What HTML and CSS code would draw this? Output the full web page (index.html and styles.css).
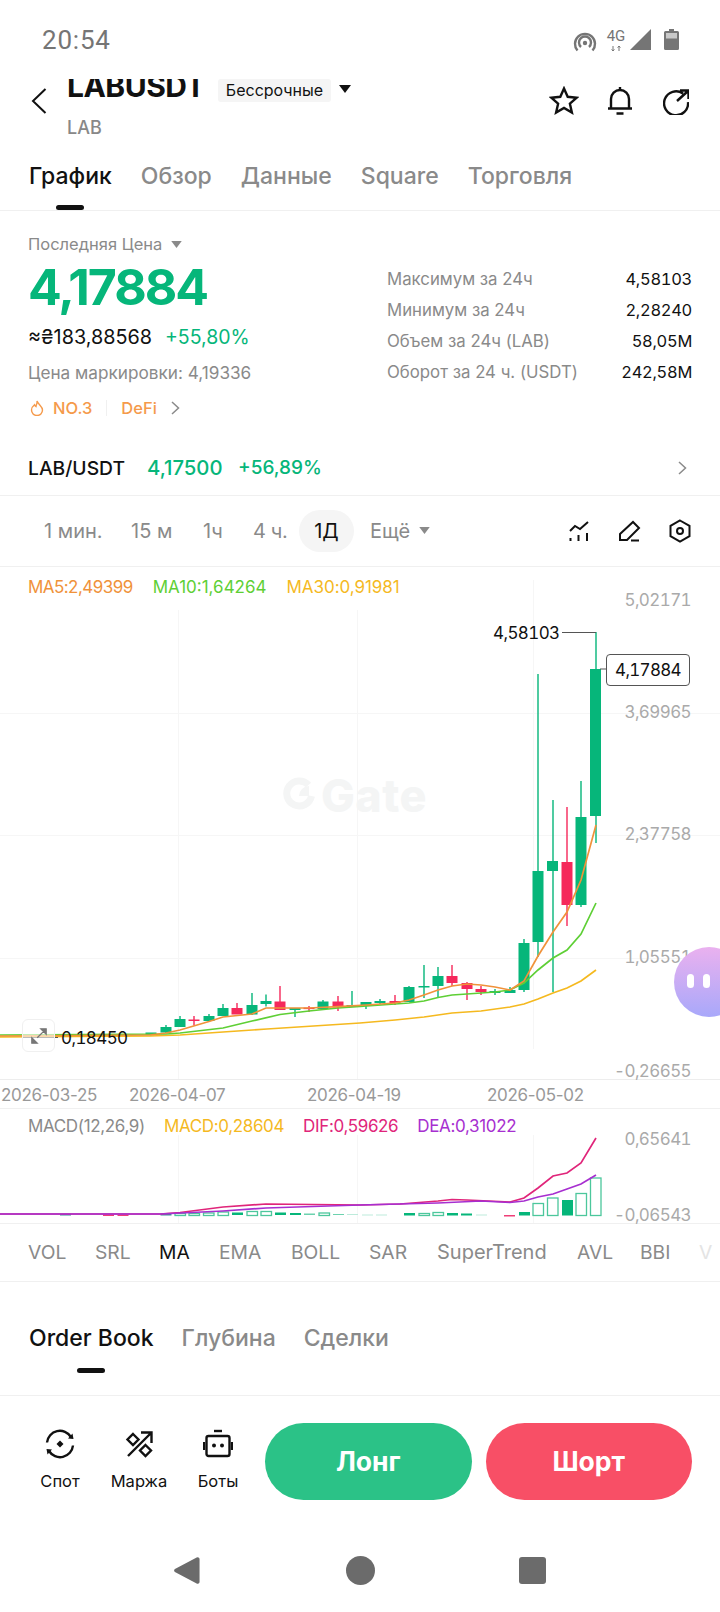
FILE: index.html
```html
<!DOCTYPE html>
<html lang="ru">
<head>
<meta charset="utf-8">
<title>LABUSDT</title>
<link rel="stylesheet" href="styles.css">
</head>
<body>
<div class="page">
  <header class="status">
    <span class="clock">20:54</span>
    <div class="status-icons">
      <svg class="ic-hotspot" viewBox="0 0 24 22"><path d="M4.500 19.500a10 10 0 1 1 15 0M8 16a6 6 0 1 1 8 0" class="st-line"/><circle cx="12" cy="12" r="2.200" class="st-fill"/></svg>
      <div class="net"><span class="net-label">4G</span><svg class="net-arrows" viewBox="0 0 12 5"><path d="M3 0v5M1.600 3.400 3 5l1.400-1.600M9 5V0M7.600 1.600 9 0l1.400 1.600" class="st-thin"/></svg></div>
      <svg class="ic-signal" viewBox="0 0 21 21"><path d="M0 21 21 0v21z" class="st-fill"/></svg>
      <svg class="ic-battery" viewBox="0 0 15 21"><path d="M5 0h5v2h3.500A1.500 1.500 0 0 1 15 3.500V19.500A1.500 1.500 0 0 1 13.500 21H1.500A1.500 1.500 0 0 1 0 19.500V3.500A1.500 1.500 0 0 1 1.500 2H5z" class="st-fill"/><rect x="2" y="4" width="11" height="5.500" class="st-white"/></svg>
    </div>
  </header>

  <section class="head">
    <svg class="ic-back" viewBox="0 0 16 26"><path d="M14.500 1 2 13l12.500 12" class="ln-2"/></svg>
    <div class="title-block">
      <div class="title-row">
        <div class="name-clip"><span class="name">LABUSDT</span></div>
        <span class="badge">Бессрочные</span>
        <svg class="tri-black" viewBox="0 0 12 8"><path d="M0 0h12L6 8z"/></svg>
      </div>
      <div class="sub">LAB</div>
    </div>
    <div class="head-actions">
      <svg class="ic-star" viewBox="0 0 30 29"><path d="m15 2.500 3.700 8.300 9 .9-6.800 6 2 8.800-7.900-4.600-7.900 4.600 2-8.800-6.800-6 9-.9z" class="ln-25"/></svg>
      <svg class="ic-bell" viewBox="0 0 26 29"><path d="M1 22.500h24M4 22.500V13a9 9 0 0 1 18 0v9.500M13 4V1M9.500 27.500h7" class="ln-25"/></svg>
      <svg class="ic-share" viewBox="0 0 26 26"><path d="M20 4.500A12 12 0 1 0 25 13M14 12 25 2M17 1.500h8.500V10" class="ln-25"/></svg>
    </div>
  </section>

  <nav class="tabs">
    <span class="tab active">График<i class="tab-bar"></i></span>
    <span class="tab">Обзор</span>
    <span class="tab">Данные</span>
    <span class="tab">Square</span>
    <span class="tab">Торговля</span>
  </nav>

  <section class="stats">
    <div class="stats-left">
      <div class="price-label">Последняя Цена<svg class="tri-grey" viewBox="0 0 12 8"><path d="M0 0h12L6 8z"/></svg></div>
      <div class="price">4,17884</div>
      <div class="fiat"><span>≈₴183,88568</span><span class="green">+55,80%</span></div>
      <div class="mark">Цена маркировки: 4,19336</div>
      <div class="tags">
        <svg class="ic-flame" viewBox="0 0 14 16"><path d="M7 1c.500 3-1 3.500-1 5.500-.800-.300-1.300-1-1.500-1.700C3 6 1.500 7.600 1.500 10a5.500 5.500 0 0 0 11 0C12.500 6.500 8.500 5 7 1z"/></svg>
        <span class="tag-text">NO.3</span>
        <i class="tag-sep"></i>
        <span class="tag-text">DeFi</span>
        <svg class="ic-chev" viewBox="0 0 9 14"><path d="m1 1 6.500 6L1 13"/></svg>
      </div>
    </div>
    <dl class="stats-right">
      <div class="stat"><dt>Максимум за 24ч</dt><dd>4,58103</dd></div>
      <div class="stat"><dt>Минимум за 24ч</dt><dd>2,28240</dd></div>
      <div class="stat"><dt>Объем за 24ч (LAB)</dt><dd>58,05M</dd></div>
      <div class="stat"><dt>Оборот за 24 ч. (USDT)</dt><dd>242,58M</dd></div>
    </dl>
  </section>

  <section class="spot-row">
    <span class="spot-name">LAB/USDT</span>
    <span class="spot-price">4,17500</span>
    <span class="spot-change">+56,89%</span>
    <svg class="ic-chev spot-chev" viewBox="0 0 9 14"><path d="m1 1 6.500 6L1 13"/></svg>
  </section>

  <section class="intervals">
    <span class="iv iv-1">1 мин.</span>
    <span class="iv iv-2">15 м</span>
    <span class="iv iv-3">1ч</span>
    <span class="iv iv-4">4 ч.</span>
    <span class="iv iv-active">1Д</span>
    <span class="iv iv-more">Ещё<svg class="tri-grey" viewBox="0 0 12 8"><path d="M0 0h12L6 8z"/></svg></span>
    <div class="iv-tools">
      <svg class="tool" viewBox="568 518 24 24"><path d="m570 530 5-5 5 3 8-7M570.500 537v3M578.500 534v6M587 532v8" class="ln-2"/></svg>
      <svg class="tool" viewBox="619 518 24 24"><path d="m621 533 13-12 6 6-12 12h-7zM632 539.500h8" class="ln-2"/></svg>
      <svg class="tool" viewBox="669 519 24 24"><path d="m681 520.500 9.500 5.300v10.400l-9.500 5.300-9.500-5.300V525.800z" class="ln-2"/><circle cx="681" cy="531" r="3" class="ln-2"/></svg>
    </div>
  </section>

  <section class="chart">
    <svg class="chart-svg" viewBox="0 567 720 512">
      <path class="grid" d="M0 713.500h720M0 835.500h720M0 958.500h720M178.500 610v469M357.500 610v469M533.500 580v469"/>
      <g class="wm">
        <path class="wm-ring" d="M308.500 785a12.500 12.500 0 1 0 3 11"/>
        <path class="wm-dot" d="M299 796h10v-10a10 10 0 0 0-10 10z"/>
      </g>
      <g class="up">
        <path d="M166 1025v8M180 1016v11M209 1014v8M223 1004v12M252 993v22M266 994.600v12M295 1008v9M323 1000v9M352 991v16M366 1002v7M380 999v5M409 986v16M424 965v33M438 967v30M495 989v6M510 987v6M524 939v53M538 674v283M553 800v192M581 781v126M596 632v211"/>
        <rect x="145.500" y="1032.500" width="11" height="2.500"/>
        <rect x="160.500" y="1027" width="11" height="5.500"/>
        <rect x="174.500" y="1019" width="11" height="8"/>
        <rect x="203.500" y="1016" width="11" height="5"/>
        <rect x="217.500" y="1008" width="11" height="8"/>
        <rect x="246.500" y="1005" width="11" height="9.500"/>
        <rect x="260.500" y="1001" width="11" height="3"/>
        <rect x="289.500" y="1008" width="11" height="2"/>
        <rect x="317.500" y="1001.500" width="11" height="7.500"/>
        <rect x="346.500" y="1005" width="11" height="2"/>
        <rect x="360.500" y="1002" width="11" height="4"/>
        <rect x="374.500" y="1001" width="11" height="2"/>
        <rect x="403.500" y="987" width="11" height="15"/>
        <rect x="418.500" y="986" width="11" height="1.500"/>
        <rect x="432.500" y="976" width="11" height="10"/>
        <rect x="489.500" y="991" width="11" height="2"/>
        <rect x="504.500" y="990" width="11" height="3"/>
        <rect x="518.500" y="943" width="11" height="47"/>
        <rect x="532.500" y="871" width="11" height="71"/>
        <rect x="547" y="861" width="11" height="10"/>
        <rect x="575.500" y="817" width="11" height="88"/>
        <rect x="590" y="669" width="11" height="147"/>
      </g>
      <g class="dn">
        <path d="M194 1016v9.500M237 1003v11M280 986v24M309 1006v6M338 996v15M395 995v10M452 965v21M467 982v18M481 986v9M567 807v119"/>
        <rect x="188.500" y="1019.500" width="11" height="1.500"/>
        <rect x="231.500" y="1008" width="11" height="6.500"/>
        <rect x="274.500" y="1001.500" width="11" height="8.500"/>
        <rect x="303.500" y="1007.600" width="11" height="1.500"/>
        <rect x="332.500" y="1001.500" width="11" height="6"/>
        <rect x="389.500" y="1001" width="11" height="2"/>
        <rect x="446.500" y="976" width="11" height="7"/>
        <rect x="461.500" y="983" width="11" height="6"/>
        <rect x="475.500" y="989" width="11" height="3"/>
        <rect x="561.500" y="862" width="11" height="43"/>
      </g>
      <polyline class="ma30" points="0,1037 150,1036 180,1035 223,1032 267,1029 360,1023 395,1020 424,1017 452,1013 481,1011 510,1007 524,1004 538,999 553,993 567,988 581,981 596,970"/>
      <polyline class="ma10" points="0,1035 166,1034 180,1033 223,1028 252,1021 280,1014.500 309,1011 338,1008 360,1006.500 395,1004 409,1003 424,1001 438,997.500 452,995 467,994 481,993 495,992 510,990 524,983 538,970 553,958 567,950 581,934 596,903"/>
      <polyline class="ma5" points="0,1036 150,1035 166,1033 180,1030 209,1021.500 223,1017 252,1014 266,1008 309,1008 338,1006.600 366,1005 395,1003 409,1000 424,995 438,990 452,986 467,984 481,985 495,987 510,990 524,981 538,956 553,932 567,912 581,880 596,825"/>
      <path class="hi-line" d="M562 632.500h34M600 669h6M22 1037.500h36"/>
    </svg>
    <div class="legend">
      <span class="c-ma5">MA5:2,49399</span>
      <span class="c-ma10">MA10:1,64264</span>
      <span class="c-ma30 wide">MA30:0,91981</span>
    </div>
    <span class="wm-text">Gate</span>
    <span class="axis ax-1">5,02171</span>
    <span class="axis ax-2">3,69965</span>
    <span class="axis ax-3">2,37758</span>
    <span class="axis ax-4">1,05551</span>
    <span class="axis ax-5">-0,26655</span>
    <span class="hi-label">4,58103</span>
    <span class="last-box">4,17884</span>
    <span class="lo-label">0,18450</span>
    <div class="expand"><svg viewBox="0 0 20 20"><path d="M12 2h6v6zM2 18h6l-6-6zM8 12l8-8" class="expand-ic"/></svg></div>
    <div class="blob"><i class="eye"></i><i class="eye"></i></div>
  </section>

  <div class="dates">
    <span class="date d1">2026-03-25</span>
    <span class="date d2">2026-04-07</span>
    <span class="date d3">2026-04-19</span>
    <span class="date d4">2026-05-02</span>
  </div>

  <section class="macd">
    <svg class="macd-svg" viewBox="0 1109 720 114">
      <path class="grid" d="M178.500 1135v88M357.500 1135v88M533.500 1135v88"/>
      <g class="bars-solid">
        <rect class="b-blue" x="60" y="1214" width="11" height="1.500"/>
        <rect class="b-pink" x="103" y="1214.500" width="11" height="1.500"/>
        <rect class="b-pink" x="117.500" y="1214.500" width="11" height="1.500"/>
        <rect class="b-blue" x="160.500" y="1214" width="11" height="1.500"/>
        <rect x="232" y="1212.500" width="11" height="2.500"/>
        <rect x="275" y="1212.500" width="11" height="2.500"/>
        <rect x="290" y="1213" width="11" height="2"/>
        <rect class="b-light" x="304" y="1213.500" width="11" height="1.500"/>
        <rect class="b-light" x="333" y="1214" width="11" height="1"/>
        <rect class="b-fade" x="347" y="1214" width="11" height="1"/>
        <rect class="b-fade" x="362" y="1214.500" width="11" height="1"/>
        <rect class="b-fade" x="376" y="1214.500" width="11" height="1"/>
        <rect x="404" y="1213" width="11" height="2.500"/>
        <rect x="447" y="1213" width="11" height="2.500"/>
        <rect x="461" y="1213.500" width="11" height="2"/>
        <rect class="b-fade" x="476" y="1214.500" width="11" height="1"/>
        <rect class="b-pink" x="504" y="1215" width="11" height="1.500"/>
        <rect x="519" y="1212" width="11" height="3.500"/>
        <rect x="562" y="1200" width="11" height="15.500"/>
      </g>
      <g class="bars-hollow">
        <rect x="175" y="1213.500" width="10.500" height="2"/>
        <rect x="189" y="1213.500" width="10.500" height="2"/>
        <rect x="203.500" y="1213" width="10.500" height="2.500"/>
        <rect x="218" y="1212" width="10.500" height="3.500"/>
        <rect x="247" y="1211.500" width="10.500" height="4"/>
        <rect x="261" y="1211.500" width="10.500" height="4"/>
        <rect x="319" y="1213" width="10.500" height="2.500"/>
        <rect x="419" y="1213.500" width="10.500" height="2"/>
        <rect x="433" y="1212.500" width="10.500" height="3"/>
        <rect x="533" y="1203.500" width="10.500" height="12"/>
        <rect x="547.500" y="1198" width="10.500" height="17.500"/>
        <rect x="576" y="1193.500" width="10.500" height="22"/>
        <rect x="590.500" y="1178" width="10.500" height="37.500"/>
      </g>
      <polyline class="dif" points="0,1214 160,1214 180,1212.500 223,1207 266,1204 360,1205 400,1204 438,1201 452,1199.500 467,1200 510,1202 524,1198 538,1188 553,1176 567,1173 581,1163 596,1138"/>
      <polyline class="dea" points="0,1214 160,1214 223,1211 266,1208 360,1205 438,1203 481,1201 510,1202.500 524,1201 538,1197 553,1194 567,1189 581,1184 596,1175"/>
    </svg>
    <div class="legend macd-legend">
      <span class="c-macd">MACD(12,26,9)</span>
      <span class="c-ma30">MACD:0,28604</span>
      <span class="c-dif">DIF:0,59626</span>
      <span class="c-dea">DEA:0,31022</span>
    </div>
    <span class="axis ax-6">0,65641</span>
    <span class="axis ax-7">-0,06543</span>
  </section>

  <nav class="indicators">
    <span class="ind i1">VOL</span>
    <span class="ind i2">SRL</span>
    <span class="ind ind-on i3">MA</span>
    <span class="ind i4">EMA</span>
    <span class="ind i5">BOLL</span>
    <span class="ind i6">SAR</span>
    <span class="ind i7">SuperTrend</span>
    <span class="ind i8">AVL</span>
    <span class="ind i9">BBI</span>
    <span class="ind i10">V</span>
  </nav>

  <nav class="book-tabs">
    <span class="tab active">Order Book<i class="tab-bar"></i></span>
    <span class="tab">Глубина</span>
    <span class="tab">Сделки</span>
  </nav>

  <section class="actions">
    <div class="tools">
      <div class="tool-item">
        <svg class="act-ic" viewBox="0 0 30 30"><path d="M2 13.500A13 13 0 0 1 26 8M28 16.500A13 13 0 0 1 4 22" class="ln-25"/><path d="m23 9.500 5.500.5-1-5.500zM7 20.500 1.500 20l1 5.500z" class="fill-k"/><path d="m15 11.500 3.500 3.500-3.500 3.500-3.500-3.500z" class="fill-k"/></svg>
        <span>Спот</span>
      </div>
      <div class="tool-item">
        <svg class="act-ic" viewBox="0 0 30 30"><path d="M4 27 27 4M17 3.500h10.500V14" class="ln-25"/><path d="m9 5 5.500 5.500L9 16l-5.500-5.500zM21.500 16 27 21.500 21.500 27 16 21.500z" class="ln-25"/></svg>
        <span>Маржа</span>
      </div>
      <div class="tool-item">
        <svg class="act-ic" viewBox="0 0 30 30"><path d="M11 2h8" class="ln-25"/><rect x="3.500" y="7" width="23" height="20" rx="2" class="ln-25"/><path d="M1 13v8M29 13v8" class="ln-25"/><circle cx="11" cy="16.500" r="2" class="fill-k"/><circle cx="19" cy="16.500" r="2" class="fill-k"/></svg>
        <span>Боты</span>
      </div>
    </div>
    <div class="trade">
      <span class="btn btn-long">Лонг</span>
      <span class="btn btn-short">Шорт</span>
    </div>
  </section>

  <footer class="sysnav">
    <svg class="nav-ic" viewBox="0 0 27 30"><path d="M24 1.500a2 2 0 0 1 3 1.500v24a2 2 0 0 1-3 1.500L1.500 16.500a2 2 0 0 1 0-3z"/></svg>
    <svg class="nav-ic" viewBox="0 0 29 29"><circle cx="14.500" cy="14.500" r="14.500"/></svg>
    <svg class="nav-ic" viewBox="0 0 27 27"><rect width="27" height="27" rx="3"/></svg>
  </footer>
</div>
</body>
</html>
```
FILE: styles.css
```css
* { box-sizing: border-box; }
html, body { margin: 0; padding: 0; background: #fff; }
body { font-family: Inter, "Noto Sans", sans-serif; color: #111; }
.page { width: 720px; height: 1612px; overflow: hidden; position: relative; background: #fff; }
dl, dt, dd { margin: 0; }
i { font-style: normal; }
svg { display: block; flex: none; }

/* status bar */
.status { height: 79px; display: flex; justify-content: space-between; padding: 25px 41px 0 42px; align-items: flex-start; }
.clock { font: 400 26px/30px Roboto, sans-serif; color: #757575; letter-spacing: .8px; }
.status-icons { display: flex; align-items: flex-start; padding-top: 4px; }
.ic-hotspot { width: 24px; height: 22px; margin: 2px 9px 0 0; }
.st-line { fill: none; stroke: #757575; stroke-width: 2.400; }
.st-thin { fill: none; stroke: #757575; stroke-width: 1; }
.st-fill { fill: #757575; }
.st-white { fill: #c9c9c9; }
.net { width: 20px; margin-right: 4px; display: flex; flex-direction: column; align-items: center; }
.net-label { font: 400 15px/15px Roboto, sans-serif; color: #757575; }
.net-arrows { width: 12px; height: 5px; margin-top: 2px; }
.ic-signal { width: 21px; height: 21px; margin-right: 13px; }
.ic-battery { width: 15px; height: 21px; }

/* header */
.head { height: 71px; display: flex; align-items: flex-start; padding-left: 31px; }
.ic-back { width: 16px; height: 26px; margin-top: 9px; }
.ln-2 { fill: none; stroke: #111; stroke-width: 2; }
.ln-25 { fill: none; stroke: #111; stroke-width: 2.400; }
.fill-k { fill: #111; }
.title-block { margin-left: 20px; width: 482px; }
.title-row { display: flex; align-items: flex-start; }
.name-clip { height: 19px; overflow: hidden; width: 151px; }
.name { display: block; font-size: 30px; font-weight: 700; line-height: 30px; margin-top: -8px; letter-spacing: -.5px; }
.badge { height: 23px; width: 113px; background: #f5f5f5; border-radius: 3px; font-size: 16px; line-height: 22px; text-align: center; color: #111; white-space: nowrap; }
.tri-black { width: 12px; height: 8px; margin: 6px 0 0 8px; fill: #111; }
.sub { font-size: 18px; font-weight: 500; line-height: 22px; color: #888; margin-top: 15px; }
.head-actions { display: flex; align-items: flex-start; }
.ic-star { width: 30px; height: 29px; margin: 7px 28px 0 0; }
.ic-bell { width: 26px; height: 29px; margin: 7px 30px 0 0; }
.ic-share { width: 26px; height: 26px; margin-top: 10px; }

/* tabs */
.tabs { height: 61px; display: flex; gap: 29px; padding: 11px 0 0 29px; border-bottom: 1px solid #f0f0f0; }
.tab { position: relative; font-size: 23px; font-weight: 500; line-height: 30px; color: #8a8a8a; height: 30px; }
.tab.active { color: #111; }
.tab-bar { position: absolute; left: 50%; bottom: -19px; width: 28px; margin-left: -14px; height: 5px; border-radius: 3px; background: #111; }

/* stats */
.stats { height: 237px; display: flex; }
.stats-left { width: 387px; padding: 23px 0 0 28px; }
.price-label { display: flex; align-items: center; font-size: 16.500px; line-height: 20px; color: #8a8a8a; }
.tri-grey { width: 11px; height: 7px; margin-left: 9px; fill: #8a8a8a; }
.price { font-size: 50px; font-weight: 700; line-height: 50px; color: #06b67a; margin-top: 8px; letter-spacing: -2px; }
.fiat { display: flex; gap: 13px; font-size: 19.800px; line-height: 24px; margin-top: 13px; }
.fiat .green { font-size: 19.500px; }
.green { color: #06b67a; }
.mark { font-size: 17.200px; line-height: 22px; color: #8a8a8a; margin-top: 13px; }
.tags { display: flex; align-items: center; height: 22px; margin-top: 13px; color: #f59a4b; font-size: 16.500px; font-weight: 500; }
.ic-flame { width: 14px; height: 16px; margin-left: 2px; fill: none; stroke: #f59a4b; stroke-width: 1.400; }
.tag-text { line-height: 22px; }
.ic-flame + .tag-text { margin-left: 9px; }
.tag-sep { width: 1px; height: 16px; background: #f0f0f0; margin: 0 14px; }
.ic-chev { width: 9px; height: 14px; fill: none; stroke: #8a8a8a; stroke-width: 1.500; margin-left: 14px; }
.stats-right { width: 305px; padding-top: 52px; }
.stat { display: flex; justify-content: space-between; height: 31px; align-items: center; font-size: 16.800px; }
.stat dt { color: #8a8a8a; }
.stat dd { color: #111; font-size: 16.500px; font-feature-settings: "tnum"; letter-spacing: -.3px; }

.spot-row { height: 48px; display: flex; align-items: flex-start; padding: 8px 33px 0 28px; font-size: 19.300px; line-height: 24px; border-bottom: 1px solid #f0f0f0; }
.spot-name { font-weight: 500; width: 119px; }
.spot-price { color: #06b67a; font-weight: 500; width: 91px; font-size: 20.300px; }
.spot-change { color: #06b67a; font-weight: 500; font-size: 19px; }
.spot-chev { margin: 5px 0 0 auto; }

/* intervals */
.intervals { height: 71px; position: relative; display: flex; align-items: center; font-size: 20px; color: #8a8a8a; padding-left: 44px; border-bottom: 1px solid #f0f0f0; padding-bottom: 1px; }
.iv { white-space: nowrap; line-height: 42px; }
.iv-1 { width: 58px; }
.iv-2 { width: 43px; margin-left: 29px; }
.iv-3 { width: 22px; margin-left: 29px; }
.iv-4 { width: 32px; margin-left: 28px; letter-spacing: -.4px; }
.iv-active { margin-left: 14px; width: 55px; height: 42px; border-radius: 21px; background: #f5f5f5; color: #111; text-align: center; }
.iv-more { margin-left: 16px; display: flex; align-items: center; }
.iv-tools { display: flex; gap: 26px; margin-left: auto; padding-right: 28px; }
.tool { width: 24px; height: 24px; }

/* chart */
.chart { height: 513px; position: relative; border-bottom: 1px solid #ededed; }
.chart-svg { position: absolute; left: 0; top: 0; width: 720px; height: 512px; }
.grid { fill: none; stroke: #f6f6f6; stroke-width: 1; }
.up { fill: #06b67a; stroke: none; }
.up path { stroke: #06b67a; stroke-width: 1.400; fill: none; }
.dn { fill: #f5285b; stroke: none; }
.dn path { stroke: #f5285b; stroke-width: 1.400; fill: none; }
.ma5, .ma10, .ma30, .dif, .dea { fill: none; stroke-width: 1.700; }
.ma5 { stroke: #f0923a; }
.ma10 { stroke: #5ecf35; }
.ma30 { stroke: #f5b91f; }
.dif { stroke: #e0257a; }
.dea { stroke: #a72fd0; }
.hi-line { fill: none; stroke: #555; stroke-width: 1; }
.legend { position: relative; display: flex; gap: 20px; padding: 9px 0 0 28px; font-size: 17px; line-height: 22px; letter-spacing: -.25px; }
.c-ma5 { color: #f0923a; letter-spacing: -.55px; }
.c-ma10 { color: #5ecf35; letter-spacing: 0; }
.c-ma30 { color: #f5b91f; }
.c-ma30.wide { letter-spacing: -.05px; }
.c-macd { color: #8a8a8a; }
.c-dif { color: #e0257a; }
.c-dea { color: #a72fd0; }
.axis { position: absolute; right: 29px; font-size: 17px; line-height: 20px; color: #aaa; font-feature-settings: "tnum"; letter-spacing: -.6px; }
.ax-1 { top: 23px; }
.ax-2 { top: 135px; }
.ax-3 { top: 257px; }
.ax-4 { top: 380px; }
.ax-5 { top: 494px; }
.ax-6 { top: 20px; }
.ax-7 { top: 96px; }
.hi-label { position: absolute; left: 493px; top: 56px; font-size: 17px; line-height: 20px; color: #111; font-feature-settings: "tnum"; letter-spacing: -.6px; }
.last-box { position: absolute; left: 606px; top: 87px; width: 84px; height: 32px; border: 1px solid #555; border-radius: 4px; background: #fff; font-size: 17px; line-height: 30px; text-align: center; color: #111; font-feature-settings: "tnum"; letter-spacing: -.7px; }
.lo-label { position: absolute; left: 61px; top: 461px; font-size: 17px; line-height: 20px; color: #111; font-feature-settings: "tnum"; letter-spacing: -.6px; }
.expand { position: absolute; left: 22px; top: 452px; width: 33px; height: 33px; border: 1px solid #f0f0f0; border-radius: 6px; background: rgba(255,255,255,.6); display: flex; align-items: center; justify-content: center; }
.expand svg { width: 18px; height: 18px; }
.expand-ic { fill: #777; stroke: #777; stroke-width: 1.400; }
.wm-ring { fill: none; stroke: #f4f5f5; stroke-width: 7; }
.wm-dot { fill: #f4f5f5; }
.wm-text { position: absolute; left: 321px; top: 204px; font-size: 45px; font-weight: 800; line-height: 50px; color: #f4f5f5; letter-spacing: .5px; }
.blob { position: absolute; left: 674px; top: 380px; width: 70px; height: 70px; border-radius: 35px; background: linear-gradient(#eab1ef, #a8a8fa); display: flex; gap: 9px; padding: 27px 0 0 13px; }
.eye { width: 7px; height: 14px; border-radius: 4px; background: #fff; }

/* dates */
.dates { height: 29px; position: relative; border-bottom: 1px solid #f0f0f0; font-size: 17px; color: #999; letter-spacing: -.3px; }
.date { position: absolute; top: 5px; line-height: 20px; }
.d1 { left: 1px; }
.d2 { left: 129px; }
.d3 { left: 307px; }
.d4 { left: 487px; }

/* macd */
.macd { height: 115px; position: relative; border-bottom: 1px solid #f0f0f0; }
.macd-svg { position: absolute; left: 0; top: 0; width: 720px; height: 114px; }
.macd-legend { padding-top: 6px; gap: 19px; }
.macd-legend span { letter-spacing: -.35px; }
.bars-solid { fill: #06b67a; }
.bars-solid .b-blue { fill: #3c8f98; }
.bars-solid .b-pink { fill: #ef3f78; }
.bars-solid .b-light { fill: #6cd2ae; }
.bars-solid .b-fade { fill: #bdebdb; }
.bars-hollow { fill: #fff; stroke: #4cc79c; stroke-width: 1.300; }

/* indicators */
.indicators { height: 58px; position: relative; border-bottom: 1px solid #f0f0f0; font-size: 19.300px; color: #8a8a8a; }
.ind { position: absolute; top: 16px; line-height: 24px; }
.ind-on { color: #111; }
.i1 { left: 28px; } .i2 { left: 95px; } .i3 { left: 159px; } .i4 { left: 219px; } .i5 { left: 291px; }
.i6 { left: 369px; } .i7 { left: 437px; font-size: 20px; } .i8 { left: 577px; } .i9 { left: 640px; } .i10 { left: 699px; color: #e4e4e4; }

/* book tabs */
.book-tabs { height: 114px; display: flex; gap: 28px; padding: 41px 0 0 29px; border-bottom: 1px solid #f0f0f0; }
.book-tabs .tab-bar { bottom: -20px; }

/* actions */
.actions { height: 145px; display: flex; padding: 27px 28px 0 30px; gap: 17px; align-items: flex-start; }
.tools { display: flex; gap: 19px; width: 218px; }
.tool-item { width: 60px; display: flex; flex-direction: column; align-items: center; font-size: 16.500px; line-height: 20px; color: #111; }
.act-ic { width: 30px; height: 30px; margin: 6px 0 12px; }
.trade { flex: 1; display: flex; gap: 14px; }
.btn { flex: 1; height: 77px; border-radius: 38.500px; color: #fff; font-size: 26.500px; font-weight: 700; line-height: 77px; text-align: center; }
.btn-long { background: #2bc287; }
.btn-short { background: #f84f66; }

/* system nav */
.sysnav { position: relative; height: 72px; display: flex; align-items: flex-start; padding: 15px 0 0 173px; }
.nav-ic { fill: #6b6b6b; height: 29px; width: 27px; }
.nav-ic:nth-child(2) { margin-left: 146px; width: 29px; }
.nav-ic:nth-child(3) { margin-left: 144px; width: 27px; height: 27px; margin-top: 1px; }
```
